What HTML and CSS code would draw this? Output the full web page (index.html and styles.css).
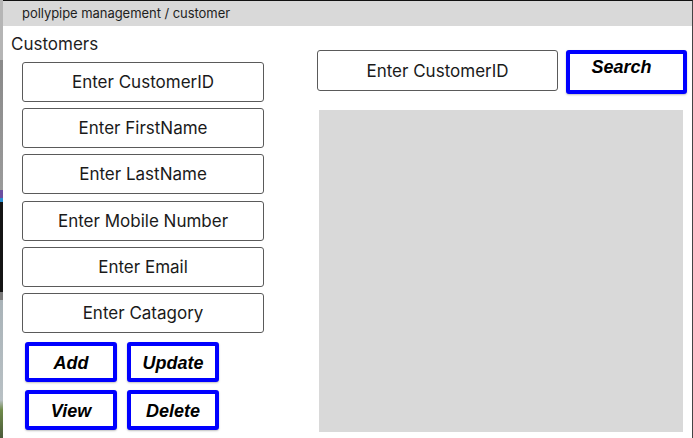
FILE: index.html
```html
<!DOCTYPE html>
<html>
<head>
<meta charset="utf-8">
<link rel="stylesheet" href="styles.css">
</head>
<body>
<div class="strip"></div>
<div class="window">
  <div class="titlebar">pollypipe management / customer</div>
  <div class="content">
    <div class="left">
      <div class="heading">Customers</div>
      <div class="fields">
        <input class="field" placeholder="Enter CustomerID">
        <input class="field" placeholder="Enter FirstName">
        <input class="field" placeholder="Enter LastName">
        <input class="field" placeholder="Enter Mobile Number">
        <input class="field" placeholder="Enter Email">
        <input class="field" placeholder="Enter Catagory">
      </div>
      <div class="actions">
        <button class="btn">Add</button>
        <button class="btn">Update</button>
        <button class="btn">View</button>
        <button class="btn">Delete</button>
      </div>
    </div>
    <div class="right">
      <div class="searchrow">
        <input class="field search-field" placeholder="Enter CustomerID">
        <button class="btn search-btn">Search</button>
      </div>
      <div class="panel"></div>
    </div>
  </div>
</div>
</body>
</html>
```
FILE: styles.css
```css
html, body {
  margin: 0;
  padding: 0;
  width: 693px;
  height: 438px;
  overflow: hidden;
  background: #fff;
}
body {
  display: flex;
  font-family: Inter, "Noto Sans", sans-serif;
  color: #1e1e1e;
}
.strip {
  width: 3px;
  flex: none;
  background: linear-gradient(to bottom,
    #b5b5b5 0, #b5b5b5 60px, #8a8a8a 60px, #9a9a9a 190px,
    #6b4fa0 190px, #6b4fa0 198px, #2a8fd0 198px, #2a8fd0 202px,
    #141414 202px, #141414 292px, #7a7a7a 292px, #7a7a7a 300px,
    #a9b3b8 300px, #b8c0c4 400px, #6f8a4a 410px, #4a5a3a 438px);
}
.window {
  flex: 1;
  border-top: 1px solid #111;
  border-right: 1px solid #444;
  display: flex;
  flex-direction: column;
}
.titlebar {
  height: 25px;
  background: #d9d9d9;
  font-size: 13px;
  letter-spacing: -0.05px;
  line-height: 24px;
  padding-left: 19px;
  color: #1e1e1e;
}
.content {
  display: flex;
  flex: 1;
}
.left {
  width: 314px;
  flex: none;
  padding-left: 8px;
  box-sizing: border-box;
}
.heading {
  font-size: 17px;
  line-height: 20px;
  margin-top: 8px;
  color: #1e1e1e;
}
.fields {
  margin-top: 8px;
  margin-left: 11px;
  display: flex;
  flex-direction: column;
  gap: 6.2px;
}
.field {
  width: 242px;
  height: 40px;
  box-sizing: border-box;
  border: 1px solid #5a5a5a;
  border-radius: 3px;
  background: #fff;
  font-family: Inter, "Noto Sans", sans-serif;
  font-size: 17px;
  text-align: center;
  color: #1a1a1a;
  padding: 0;
  outline: none;
}
.field::placeholder {
  color: #1a1a1a;
  opacity: 1;
}
.actions {
  margin-top: 9px;
  margin-left: 14px;
  display: grid;
  grid-template-columns: 92px 92px;
  column-gap: 10px;
  row-gap: 8px;
}
.btn {
  height: 40px;
  box-sizing: border-box;
  border: 4px solid #0000ff;
  border-radius: 3px;
  background: #fff;
  font-family: "Liberation Sans", Arial, sans-serif;
  font-weight: bold;
  font-style: italic;
  font-size: 18px;
  color: #000;
  padding: 3px 0 0 0;
  box-shadow: 0 1px 2px rgba(0,0,0,0.25);
}
.right {
  padding-top: 24px;
}
.searchrow {
  display: flex;
  align-items: flex-start;
  gap: 8px;
}
.search-field {
  width: 241px;
  height: 41px;
}
.search-btn {
  width: 121px;
  height: 44px;
  padding: 0 10px 10px 0;
}
.panel {
  margin-top: 16px;
  margin-left: 2px;
  width: 364px;
  height: 322px;
  background: #d9d9d9;
}
```
